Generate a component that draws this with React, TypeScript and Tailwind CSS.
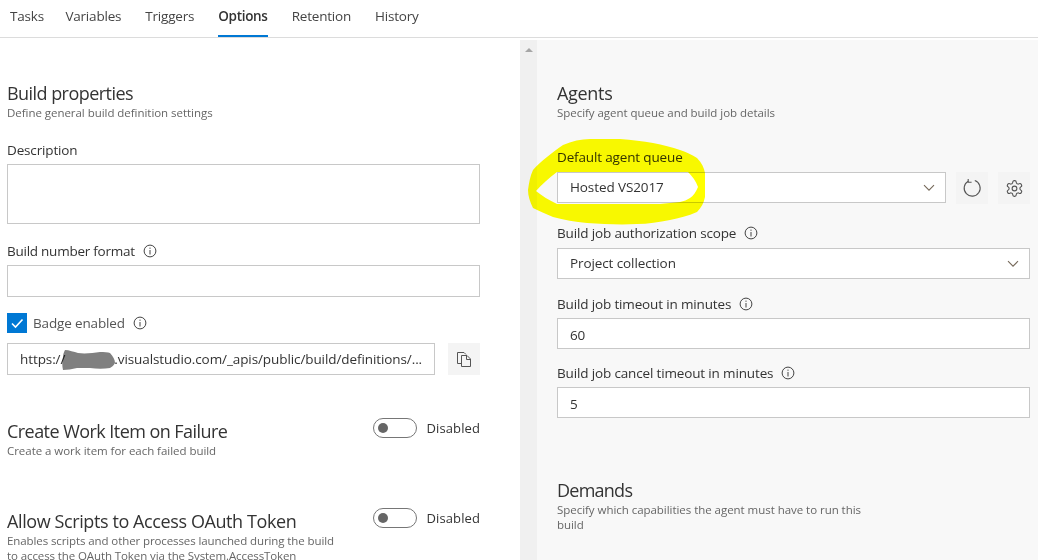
import React from "react";

const font = { fontFamily: '"Open Sans", "Noto Sans", sans-serif' };

function Info() {
  return (
    <svg width="14" height="14" viewBox="0 0 14 14" fill="none" className="shrink-0 ml-[8px]">
      <circle cx="7" cy="7" r="5.9" stroke="#444" strokeWidth="1" />
      <rect x="6.5" y="6" width="1" height="4.5" fill="#444" />
      <rect x="6.5" y="3.6" width="1" height="1.2" fill="#444" />
    </svg>
  );
}

function Chevron() {
  return (
    <svg width="12" height="8" viewBox="0 0 12 8" fill="none">
      <path d="M1 1.2 L6 6.2 L11 1.2" stroke="#76695a" strokeWidth="1.1" />
    </svg>
  );
}

function Label({ children, info }: { children: React.ReactNode; info?: boolean }) {
  return (
    <div className="flex items-center h-[18px] text-[13.5px] leading-[18px] tracking-[-0.15px] text-[#333333]">
      {children}
      {info && <Info />}
    </div>
  );
}

function Field({ value, className = "" }: { value?: string; className?: string }) {
  return (
    <div className={`flex items-center border border-[#c8c8c8] bg-white pl-[12px] text-[13.5px] tracking-[-0.1px] text-[#333333] ${className}`}>
      {value}
    </div>
  );
}

function Select({ value, className = "" }: { value: string; className?: string }) {
  return (
    <div className={`flex items-center justify-between h-[31px] border border-[#c8c8c8] bg-white pl-[12px] pr-[10px] text-[13.5px] tracking-[-0.1px] text-[#333333] ${className}`}>
      {value}
      <Chevron />
    </div>
  );
}

function Heading({ title, desc, tracking, descTracking = "tracking-[-0.04px]" }: { title: string; desc: React.ReactNode; tracking: string; descTracking?: string }) {
  return (
    <div>
      <div className={`h-[24px] text-[18px] leading-[24px] text-[#333333] ${tracking}`}>{title}</div>
      <div className={`text-[11.5px] leading-[15px] text-[#666666] whitespace-pre-line ${descTracking}`}>{desc}</div>
    </div>
  );
}

function Toggle() {
  return (
    <div className="flex items-center gap-[10px] shrink-0 -mt-[1px]">
      <div className="flex items-center w-[44px] h-[20px] rounded-full border border-[#767676] pl-[4px]">
        <div className="w-[10px] h-[10px] rounded-full bg-[#666666]" />
      </div>
      <span className="text-[13px] leading-[18px] tracking-[0.1px] text-[#333333]">Disabled</span>
    </div>
  );
}

function ToggleRow({ title, desc, tracking, descTracking }: { title: string; desc: string; tracking: string; descTracking?: string }) {
  return (
    <div className="flex justify-between items-start">
      <Heading title={title} desc={desc} tracking={tracking} descTracking={descTracking} />
      <Toggle />
    </div>
  );
}

function IconButton({ children }: { children: React.ReactNode }) {
  return (
    <div className="flex items-center justify-center w-[32px] h-[32px] bg-[#f4f4f4] shrink-0">{children}</div>
  );
}

const tabs = ["Tasks", "Variables", "Triggers", "Options", "Retention", "History"];

export default function App() {
  return (
    <div style={font} className="relative w-[1038px] h-[560px] overflow-hidden bg-white">
      <div className="flex items-start gap-[24px] h-[38px] pl-[10px] border-b border-[#dcdcdc] text-[13.5px] tracking-[-0.2px] text-[#444444]">
        {tabs.map((t) => (
          <div
            key={t}
            className={
              t === "Options"
                ? "flex items-center h-[37px] pb-[3px] font-semibold tracking-[-0.3px] text-[#333333] border-b-2 border-[#0078d4]"
                : t === "Tasks"
                  ? "flex items-center h-[37px] pb-[5px] -mr-[2.5px]"
                  : "flex items-center h-[37px] pb-[5px]"
            }
          >
            {t}
          </div>
        ))}
      </div>

      <div className="flex h-[522px]">
        <div className="w-[520px] shrink-0 pl-[7px] pr-[40px] pt-[43px]">
          <Heading title="Build properties" tracking="tracking-[-0.55px]" desc="Define general build definition settings" />
          <div className="mt-[21px]"><Label>Description</Label></div>
          <div className="mt-[5px] h-[60px] border border-[#c8c8c8]" />
          <div className="mt-[18px]"><Label info><span className="tracking-[-0.25px]">Build number format</span></Label></div>
          <Field className="mt-[5px] h-[32px]" />
          <div className="flex items-center mt-[16px] h-[20px]">
            <div className="flex items-center justify-center w-[20px] h-[20px] bg-[#0078d4]">
              <svg width="14" height="12" viewBox="0 0 14 12" fill="none">
                <path d="M2 6.5 L5.5 10 L12.5 2.5" stroke="#fff" strokeWidth="1.6" />
              </svg>
            </div>
            <span className="ml-[6px]"><Label info><span className="text-[#555555]">Badge enabled</span></Label></span>
          </div>
          <div className="flex justify-between mt-[10px]">
            <div className="flex items-center w-[428px] h-[32px] border border-[#c8c8c8] pl-[12px] pt-[1px] text-[13.5px] tracking-[-0.09px] text-[#333333] whitespace-nowrap overflow-hidden">
              https://<span className="inline-block w-[49px]" />.visualstudio.com/_apis/public/build/definitions/...
            </div>
            <IconButton>
              <svg width="16" height="17" viewBox="0 0 16 17" fill="none" stroke="#555" strokeWidth="1">
                <path d="M5.5 12.5 H1.5 V1.5 H8 L10 3.5" />
                <path d="M5.5 4.5 H11 L14.5 8 V15.5 H5.5 Z" />
                <path d="M10.5 4.5 V8.5 H14.5" />
              </svg>
            </IconButton>
          </div>
          <div className="mt-[44px]">
            <ToggleRow title="Create Work Item on Failure" tracking="tracking-[-0.55px]" desc="Create a work item for each failed build" />
          </div>
          <div className="mt-[51px]">
            <ToggleRow title="Allow Scripts to Access OAuth Token" tracking="tracking-[-0.4px]" descTracking="tracking-[-0.1px]" desc={"Enables scripts and other processes launched during the build\nto access the OAuth Token via the System.AccessToken"} />
          </div>
        </div>

        <div className="flex justify-center w-[17px] shrink-0 mt-[2px] bg-[#f0f0f0] pt-[8px]">
          <div className="w-0 h-0 border-l-[4px] border-r-[4px] border-b-[4px] border-l-transparent border-r-transparent border-b-[#a6a6a6]" />
        </div>

        <div className="flex-1 mt-[2px] bg-[#f8f8f8] pl-[20px] pr-[8px] pt-[41px]">
          <Heading title="Agents" tracking="tracking-[-0.3px]" desc="Specify agent queue and build job details" />
          <div className="mt-[28px]"><Label>Default agent queue</Label></div>
          <div className="flex items-start mt-[6px]">
            <Select value="Hosted VS2017" className="w-[389px]" />
            <div className="flex gap-[10px] ml-[10px]">
              <IconButton>
                <svg width="20" height="20" viewBox="0 0 20 20" fill="none" stroke="#555" strokeWidth="1.1">
                  <path d="M6.2 3.2 A8 8 0 1 0 12.8 2.6" />
                  <path d="M6.2 1 V4.2 H9.6" />
                </svg>
              </IconButton>
              <IconButton>
                <svg width="19" height="19" viewBox="0 0 24 24" fill="none" stroke="#555" strokeWidth="1.4" strokeLinecap="round" strokeLinejoin="round">
                  <path d="M12.22 2h-.44a2 2 0 0 0-2 2v.18a2 2 0 0 1-1 1.73l-.43.25a2 2 0 0 1-2 0l-.15-.08a2 2 0 0 0-2.73.73l-.22.38a2 2 0 0 0 .73 2.73l.15.1a2 2 0 0 1 1 1.72v.51a2 2 0 0 1-1 1.74l-.15.09a2 2 0 0 0-.73 2.73l.22.38a2 2 0 0 0 2.73.73l.15-.08a2 2 0 0 1 2 0l.43.25a2 2 0 0 1 1 1.73V20a2 2 0 0 0 2 2h.44a2 2 0 0 0 2-2v-.18a2 2 0 0 1 1-1.73l.43-.25a2 2 0 0 1 2 0l.15.08a2 2 0 0 0 2.73-.73l.22-.39a2 2 0 0 0-.73-2.73l-.15-.08a2 2 0 0 1-1-1.74v-.5a2 2 0 0 1 1-1.74l.15-.09a2 2 0 0 0 .73-2.73l-.22-.38a2 2 0 0 0-2.73-.73l-.15.08a2 2 0 0 1-2 0l-.43-.25a2 2 0 0 1-1-1.73V4a2 2 0 0 0-2-2z" />
                  <circle cx="12" cy="12" r="3" />
                </svg>
              </IconButton>
            </div>
          </div>
          <div className="mt-[20px]"><Label info>Build job authorization scope</Label></div>
          <Select value="Project collection" className="mt-[6px]" />
          <div className="mt-[16px]"><Label info>Build job timeout in minutes</Label></div>
          <Field value="60" className="mt-[5px] h-[31px] pt-[3px]" />
          <div className="mt-[15px]"><Label info>Build job cancel timeout in minutes</Label></div>
          <Field value="5" className="mt-[5px] h-[31px] pt-[3px]" />
          <div className="mt-[60px] w-[320px]">
            <Heading title="Demands" tracking="tracking-[-0.75px]" desc={"Specify which capabilities the agent must have to run this\nbuild"} />
          </div>
        </div>
      </div>

      <svg className="absolute left-0 top-0 pointer-events-none mix-blend-multiply" width="1038" height="560" viewBox="0 0 1038 560">
        <path
          fillRule="evenodd"
          fill="#ffff00"
          d="M563 145 C572 141 581 139 590 139 L620 139 C632 140 643 141 653 143 C663 145 672 147 680 150 C687 152 692 155 697 158 C702 163 704 168 705 173 L705 197 C704 203 701 208 697 212 C688 216 679 218 670 220 C659 222 648 224 637 224 C620 225 603 224 587 223 C575 222 564 220 553 217 C546 214 539 211 533 208 C530 202 528 196 528 190 C529 183 530 176 533 170 C537 165 542 161 547 157 C552 153 557 149 563 145 Z
             M536 191 C542 184 549 178 557 172 L688 172 C692 176 696 181 698 187 C696 192 693 196 690 198 C687 200 684 201 680 202 L660 204 L557 204 C549 200 542 196 536 191 Z"
        />
        <path
          fill="#808080"
          d="M65 350 C69 350 74 352 78 353 C85 354 93 353 100 352 C104 352 108 352 110 353 C113 356 115 360 115 363 C114 365 112 367 110 368 C104 369 97 369 90 368 C85 368 81 368 77 368 C72 369 67 370 63 370 C62 366 62 361 63 357 C63 354 64 352 65 350 Z"
        />
      </svg>
    </div>
  );
}
